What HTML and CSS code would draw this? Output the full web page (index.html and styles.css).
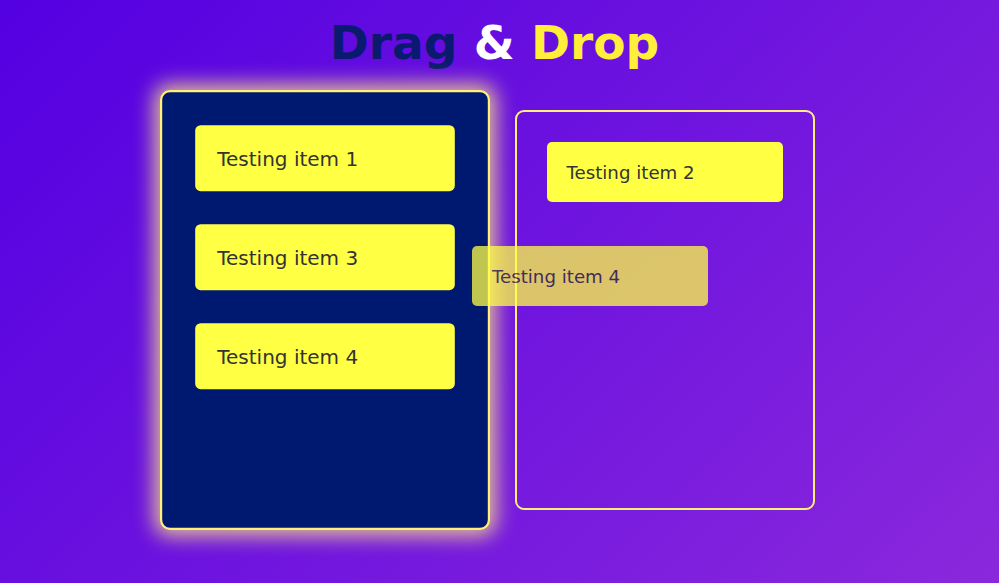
FILE: index.html
```html
<!DOCTYPE html>
<html lang="en">
<head>
<meta charset="utf-8">
<title>Drag &amp; Drop</title>
<link rel="stylesheet" href="styles.css">
</head>
<body>
  <h1 class="title"><span class="t-drag">Drag</span> <span class="t-amp">&amp;</span> <span class="t-drop">Drop</span></h1>
  <main class="board">
    <section class="column column-hover">
      <div class="item">Testing item 1</div>
      <div class="item">Testing item 3</div>
      <div class="item">Testing item 4</div>
    </section>
    <section class="column">
      <div class="item">Testing item 2</div>
    </section>
  </main>
  <div class="item ghost">Testing item 4</div>
</body>
</html>
```
FILE: styles.css
```css
html, body {
  margin: 0;
  padding: 0;
}
body {
  width: 999px;
  height: 583px;
  overflow: hidden;
  box-sizing: border-box;
  padding-right: 10px;
  background: linear-gradient(135deg, #5300e2 0%, #8a28dc 100%);
  font-family: "DejaVu Sans", Verdana, sans-serif;
  position: relative;
}
.title {
  margin: 15px 0 0;
  text-align: center;
  font-size: 47px;
  font-weight: bold;
  line-height: 56px;
}
.t-drag { color: #0a1a6e; }
.t-amp { color: #ffffff; }
.t-drop { color: #ffee3a; }
.board {
  display: flex;
  justify-content: center;
  gap: 40px;
  margin-top: 39px;
}
.column {
  width: 300px;
  height: 400px;
  box-sizing: border-box;
  border: 2px solid #fff07a;
  border-radius: 9px;
  padding: 30px;
}
.column-hover {
  background: #001970;
  transform: scale(1.1);
  box-shadow: 0 0 18px 5px rgba(255, 236, 130, 0.8);
}
.item {
  height: 60px;
  box-sizing: border-box;
  display: flex;
  align-items: center;
  padding: 0 20px;
  margin-bottom: 30px;
  background: #ffff44;
  color: #333333;
  border-radius: 5px;
  font-size: 18.2px;
}
.ghost {
  position: absolute;
  left: 472px;
  top: 246px;
  width: 236px;
  margin: 0;
  opacity: 0.75;
}
```
